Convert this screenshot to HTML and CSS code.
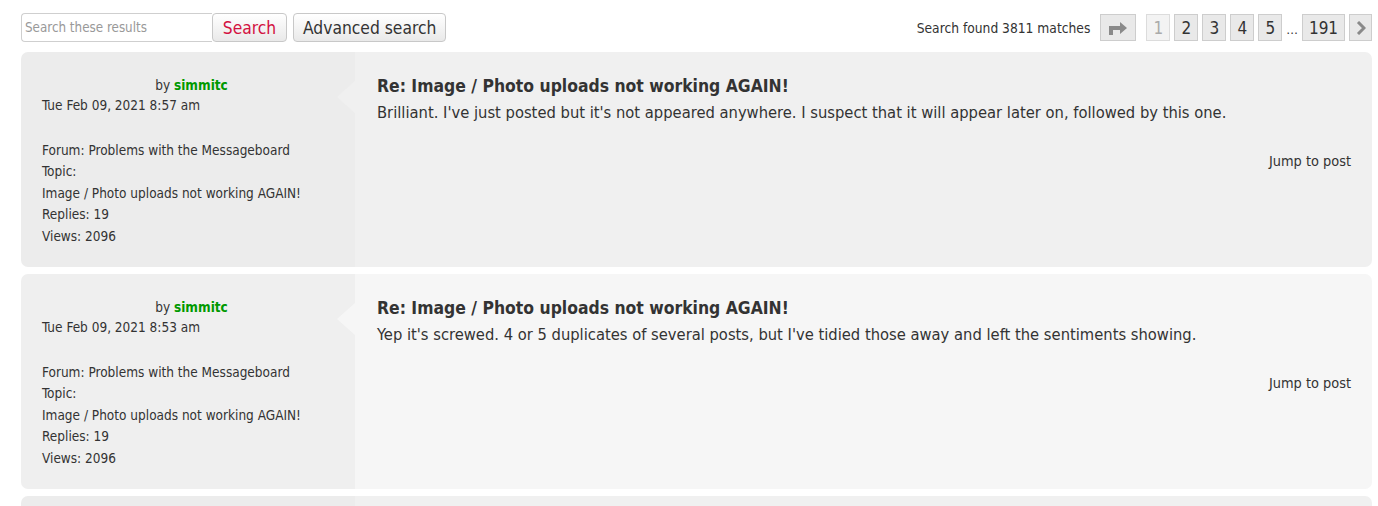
FILE: index.html
```html
<!DOCTYPE html>
<html lang="en">
<head>
    <meta charset="UTF-8">
    <meta name="viewport" content="width=device-width, initial-scale=1.0">
    <title>Search results</title>
    <link rel="stylesheet" href="styles.css">
</head>
<body>
    <div class="action-bar">
        <form class="search-box">
            <input class="inputbox" type="search" placeholder="Search these results">
            <button class="button search-btn" type="button">Search</button>
        </form>
        <button class="button" type="button">Advanced search</button>

        <div class="pagination">
            <span class="found">Search found 3811 matches</span>
            <a class="page jump" href="#">
                <svg width="22" height="14" viewBox="0 0 22 14">
                    <path d="M2 14V5h11V1l7 6-7 6V9H6v5z" fill="#8a8a8a"/>
                </svg>
            </a>
            <ul>
                <li><span class="page active">1</span></li>
                <li><a class="page" href="#">2</a></li>
                <li><a class="page" href="#">3</a></li>
                <li><a class="page" href="#">4</a></li>
                <li><a class="page" href="#">5</a></li>
                <li class="ellipsis">…</li>
                <li><a class="page big" href="#">191</a></li>
                <li>
                    <a class="page next" href="#">
                        <svg width="10" height="14" viewBox="0 0 10 14">
                            <path d="M2 1l6 6-6 6" fill="none" stroke="#8a8a8a" stroke-width="3"/>
                        </svg>
                    </a>
                </li>
            </ul>
        </div>
    </div>

    <div class="search post bg2">
        <div class="postprofile">
            <div class="author">by <a class="username" href="#">simmitc</a></div>
            <div>Tue Feb 09, 2021 8:57 am</div>
            <div class="meta">
                <div>Forum: Problems with the Messageboard</div>
                <div>Topic:</div>
                <div>Image / Photo uploads not working AGAIN!</div>
                <div>Replies: 19</div>
                <div>Views: 2096</div>
            </div>
        </div>
        <div class="postbody">
            <h3>Re: Image / Photo uploads not working AGAIN!</h3>
            <div class="content">Brilliant. I've just posted but it's not appeared anywhere. I suspect that it will appear later on, followed by this one.</div>
            <div class="jump-link"><a href="#">Jump to post</a></div>
        </div>
    </div>

    <div class="search post bg1">
        <div class="postprofile">
            <div class="author">by <a class="username" href="#">simmitc</a></div>
            <div>Tue Feb 09, 2021 8:53 am</div>
            <div class="meta">
                <div>Forum: Problems with the Messageboard</div>
                <div>Topic:</div>
                <div>Image / Photo uploads not working AGAIN!</div>
                <div>Replies: 19</div>
                <div>Views: 2096</div>
            </div>
        </div>
        <div class="postbody">
            <h3>Re: Image / Photo uploads not working AGAIN!</h3>
            <div class="content">Yep it's screwed. 4 or 5 duplicates of several posts, but I've tidied those away and left the sentiments showing.</div>
            <div class="jump-link"><a href="#">Jump to post</a></div>
        </div>
    </div>

    <div class="search post bg2 last">
        <div class="postprofile"></div>
        <div class="postbody"></div>
    </div>
</body>
</html>
```

FILE: styles.css
```css
body {
    margin: 0;
    padding: 13px 6px 0 21px;
    font-family: "DejaVu Sans Condensed", "DejaVu Sans", sans-serif;
    color: #333;
    background-color: #fff;
    font-size: 13px;
}

a {
    color: #333;
    text-decoration: none;
}

/* Top action bar */
.action-bar {
    display: flex;
    align-items: center;
    height: 29px;
    margin-bottom: 10px;
}

.search-box {
    display: flex;
    margin: 0 6px 0 0;
}

.inputbox {
    box-sizing: border-box;
    width: 191px;
    height: 29px;
    border: 1px solid #cfcfcf;
    border-right: none;
    border-radius: 4px 0 0 4px;
    padding: 0 3px;
    font-family: inherit;
    font-size: 13.3px;
    color: #333;
    background: #fff;
}

.inputbox::placeholder {
    color: #999;
}

.button {
    box-sizing: border-box;
    height: 29px;
    padding: 0 9px;
    border: 1px solid #c8c8c8;
    border-radius: 4px;
    background: linear-gradient(#ffffff, #e9e9e9);
    font-family: inherit;
    font-size: 17.3px;
    color: #333;
    cursor: pointer;
}

.search-btn {
    width: 75px;
    color: #d31141;
}

.pagination {
    display: flex;
    align-items: center;
    margin-left: auto;
}

.found {
    margin-right: 10px;
    font-size: 13.7px;
}

.pagination ul {
    display: flex;
    align-items: center;
    list-style: none;
    margin: 0;
    padding: 0;
}

.pagination li {
    margin-left: 4px;
}

.page {
    display: flex;
    align-items: center;
    justify-content: center;
    box-sizing: border-box;
    min-width: 24px;
    height: 27px;
    padding: 0 4px;
    border: 1px solid #cdcdcd;
    background-color: #e9e9e9;
    font-size: 17px;
    color: #333;
}

.page.jump {
    width: 36px;
    margin-right: 6px;
}

.page.active {
    background-color: #f3f3f3;
    border-color: #dcdcdc;
    color: #aaa;
}

.page.big {
    min-width: 43px;
}

.page.next {
    width: 23px;
    min-width: 23px;
}

.ellipsis {
    font-size: 13px;
    padding-top: 4px;
}

/* Search result posts */
.post {
    display: flex;
    border-radius: 7px;
    overflow: hidden;
    margin-bottom: 7px;
    min-height: 215px;
}

.bg2 .postprofile { background-color: #ececec; }
.bg2 .postbody { background-color: #f0f0f0; }
.bg1 .postprofile { background-color: #efefef; }
.bg1 .postbody { background-color: #f6f6f6; }

.postprofile {
    box-sizing: border-box;
    width: 334px;
    flex-shrink: 0;
    padding: 23px 14px 0 21px;
    font-size: 13.5px;
    line-height: 21.5px;
}

.author {
    text-align: center;
    line-height: 20px;
}

.username {
    color: #009900;
    font-weight: bold;
}

.meta {
    margin-top: 23px;
}

.postbody {
    position: relative;
    flex: 1;
    padding: 22px 21px 0 22px;
}

.postbody::before {
    content: "";
    position: absolute;
    left: -18px;
    top: 29px;
    border-style: solid;
    border-width: 16px 18px 16px 0;
    border-color: transparent;
}

.bg2 .postbody::before { border-right-color: #f0f0f0; }
.bg1 .postbody::before { border-right-color: #f6f6f6; }

.postbody h3 {
    margin: 0;
    font-size: 17.4px;
    font-weight: bold;
    line-height: 24px;
    color: #333;
}

.content {
    margin-top: 1px;
    font-size: 16.4px;
    line-height: 27px;
}

.jump-link {
    text-align: right;
    margin-top: 27px;
    font-size: 14.4px;
}
```
